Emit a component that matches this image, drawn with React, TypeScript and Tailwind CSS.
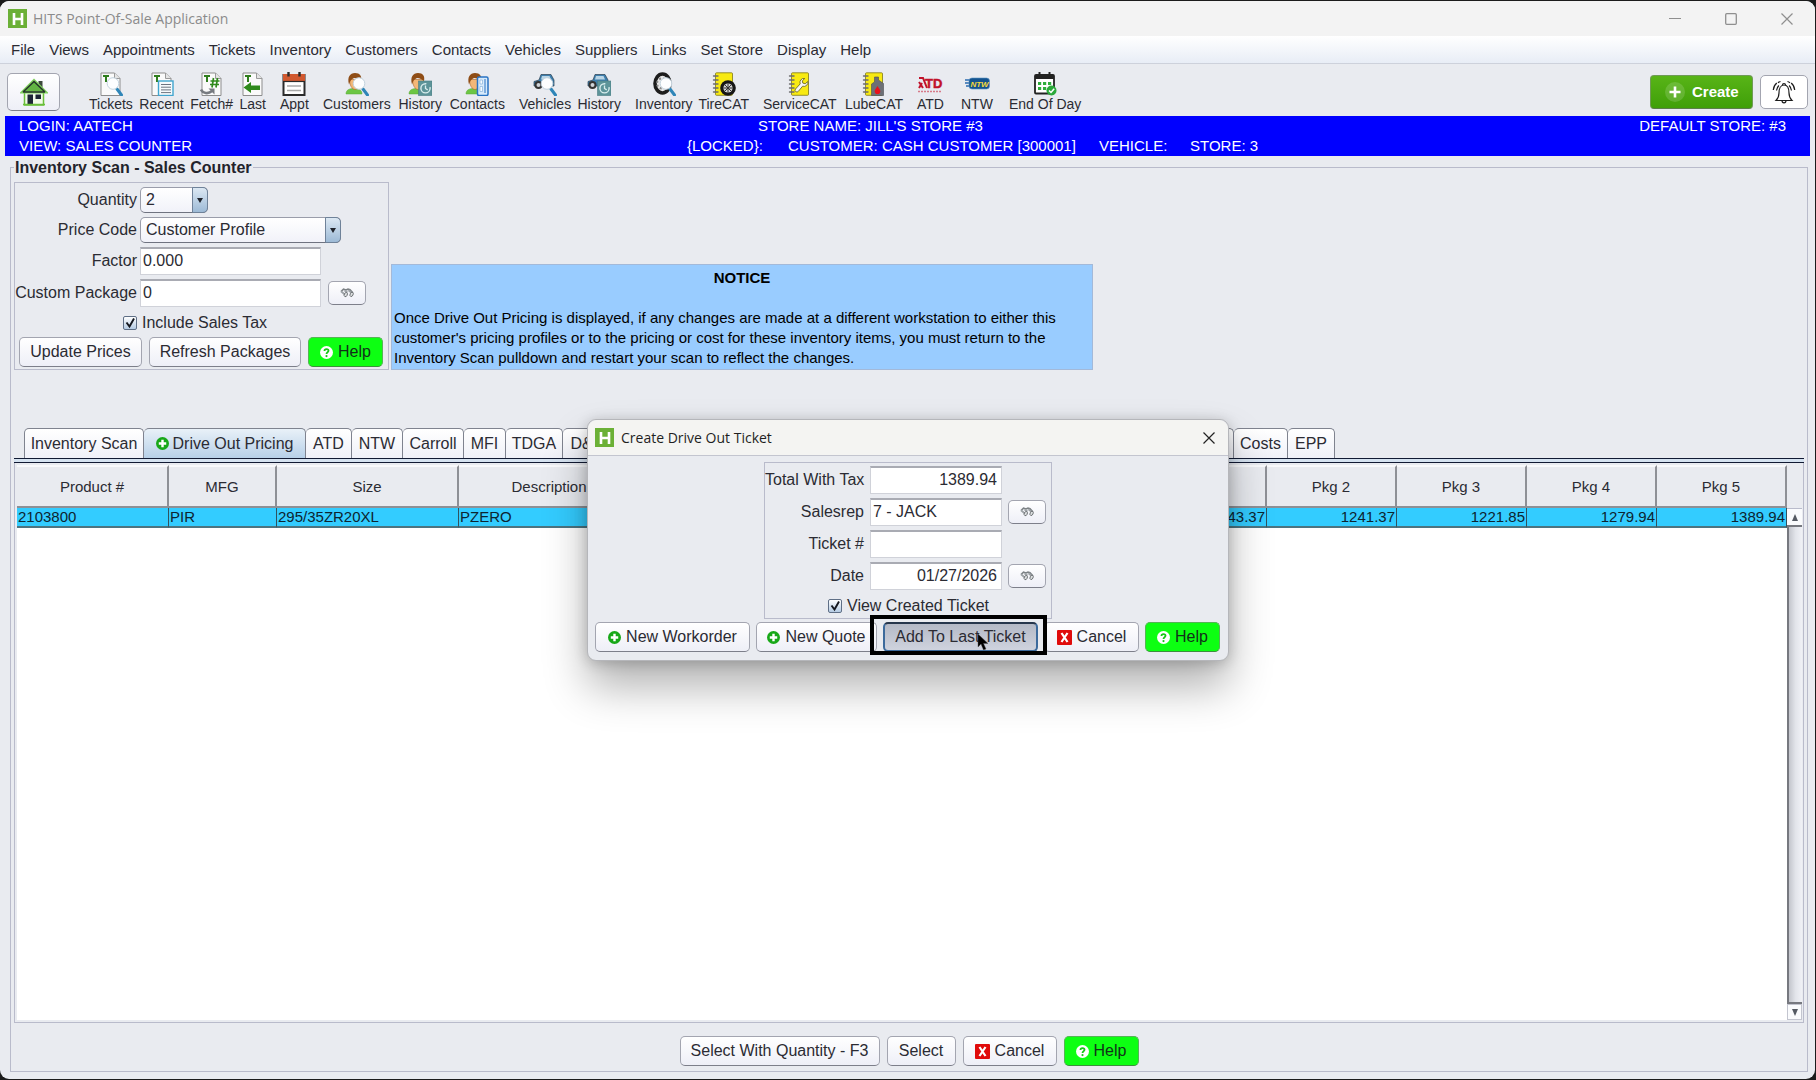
import type { ReactNode } from "react";

const menuItems = [
  "File",
  "Views",
  "Appointments",
  "Tickets",
  "Inventory",
  "Customers",
  "Contacts",
  "Vehicles",
  "Suppliers",
  "Links",
  "Set Store",
  "Display",
  "Help",
];

/* ---------- icon parts ---------- */

function Svg({ children }: { children: ReactNode }) {
  return (
    <svg viewBox="0 0 24 24" className="h-6 w-6" fill="none" aria-hidden="true">
      {children}
    </svg>
  );
}

function TicketSheet() {
  return (
    <>
      <path d="M2 1h13.500l5.500 5.500V23.500H2z" fill="#fafafa" stroke="#8d8d8d" />
      <path d="M15.500 1v5.500H21" fill="#e4e4e4" stroke="#9a9a9a" />
      <path d="M4 4h6M7 4v6" stroke="#2f7d1d" strokeWidth="2" />
    </>
  );
}

function Lens() {
  return (
    <>
      <path d="M18 17l4.500 6" stroke="#2f86b8" strokeWidth="3" strokeLinecap="round" />
      <circle cx="14" cy="11.500" r="5.800" fill="#fdfeff" stroke="#c3d3de" />
    </>
  );
}

function Clock() {
  return (
    <>
      <rect x="10.500" y="9" width="13.500" height="14.500" fill="#5d9499" stroke="#4a7d82" strokeWidth=".6" />
      <circle cx="17.500" cy="16.300" r="4.600" stroke="#d9eded" strokeWidth="1.400" strokeDasharray="22 5" />
      <path d="M17.500 13.500v3l2.200 1.400" stroke="#d9eded" strokeWidth="1.300" />
    </>
  );
}

function Person() {
  return (
    <>
      <path d="M1 22c0-4 3-5.500 8-5.500s8 1.500 8 5.500z" fill="#6cc644" stroke="#5aa838" strokeWidth=".5" />
      <path d="M4.500 7.500C4.500 13 7 17.500 10 17.500s5.500-4.500 5.500-10z" fill="#f3b777" stroke="#a9662a" strokeWidth=".6" />
      <path d="M4 12.500C2 5 5 1 10 1s7 3 6 8c-2-1.500-4-3-7-3-2.500 1-4 3-5 6.500z" fill="#8f4d16" />
    </>
  );
}

function Car() {
  return (
    <>
      <path d="M1 9.500l5-1.500 2-5.500h10l3 5.500v6H1z" fill="#3e7fae" stroke="#2a3f50" strokeWidth=".7" />
      <path d="M9 4h7.500l1.500 3.500H8z" fill="#b9d5e6" />
      <circle cx="5.500" cy="13" r="4" fill="#333" />
      <circle cx="5.500" cy="13" r="2" fill="#cfd3d8" />
    </>
  );
}

function Notebook() {
  return (
    <>
      <rect x="3.500" y=".8" width="17" height="22.500" rx="1" fill="#f8ea12" stroke="#7d7719" strokeWidth=".8" />
      {[4, 8, 12, 16, 20].map((y) => (
        <path key={y} d={`M1.500 ${y}h4.500`} stroke="#6b6b6b" strokeWidth="1.400" strokeLinecap="round" />
      ))}
    </>
  );
}

const icons = {
  tickets: (
    <Svg>
      <TicketSheet />
      <Lens />
    </Svg>
  ),
  recent: (
    <Svg>
      <TicketSheet />
      <rect x="8.500" y="9" width="14.500" height="14.500" fill="#f6fafc" stroke="#41a5cf" strokeWidth="1.400" />
      <path d="M11 12.500h10M11 15.200h10M11 17.900h10M11 20.600h10" stroke="#6c7480" />
    </Svg>
  ),
  fetch: (
    <Svg>
      <TicketSheet />
      <path d="M13.500 6l-1.500 9.500M17.500 6l-1.500 9.500M10.500 9h9M10 12.500h9" stroke="#2f8a1c" strokeWidth="1.700" />
      <path d="M1 17.500c2 4 7 5 11 1.500" stroke="#777b80" strokeWidth="2.600" />
      <path d="M8.500 16.500h6v6z" fill="#777b80" />
    </Svg>
  ),
  last: (
    <Svg>
      <TicketSheet />
      <path d="M2.500 15.500l7.500-5.500v3.500h9v4.500h-9V21z" fill="#2f8a1c" />
    </Svg>
  ),
  appt: (
    <Svg>
      <rect x="1.500" y="3" width="21" height="20" fill="#fff" stroke="#2b2b2b" strokeWidth="2" />
      <path d="M1 2h22v8H1z" fill="#d1582f" />
      <path d="M1 9.500h22" stroke="#2b2b2b" strokeWidth="1.200" />
      <path d="M6.500 0v4.500M17.500 0v4.500" stroke="#2b2b2b" strokeWidth="2.400" />
      <path d="M5 14h14M5 18.500h14" stroke="#a9a9a9" strokeWidth="1.600" />
    </Svg>
  ),
  customers: (
    <Svg>
      <Person />
      <Lens />
    </Svg>
  ),
  customerHistory: (
    <Svg>
      <Person />
      <Clock />
    </Svg>
  ),
  contacts: (
    <Svg>
      <Person />
      <rect x="12.500" y="5" width="10.500" height="18.500" rx="1.500" fill="#d7eafb" stroke="#2873c4" strokeWidth="1.500" />
      <path d="M15 8h2.500v4H15zM15 14.500h2.500v5H15z" fill="#f8fcff" stroke="#79a9d8" strokeWidth=".6" />
      <path d="M20 7v14" stroke="#2873c4" />
    </Svg>
  ),
  vehicles: (
    <Svg>
      <Car />
      <Lens />
    </Svg>
  ),
  vehicleHistory: (
    <Svg>
      <Car />
      <Clock />
    </Svg>
  ),
  inventory: (
    <Svg>
      <ellipse cx="10.500" cy="11.500" rx="7.500" ry="9.500" fill="#e8e8e8" stroke="#1d1d1d" strokeWidth="3.600" />
      <circle cx="10" cy="11.500" r="5" stroke="#8b8b8b" strokeDasharray="2 2" strokeWidth="2" />
      <Lens />
    </Svg>
  ),
  tirecat: (
    <Svg>
      <Notebook />
      <circle cx="16" cy="16" r="7.800" fill="#161616" />
      <circle cx="16" cy="16" r="4.600" fill="#d7d7d7" />
      <path d="M16 11.500v9M11.500 16h9M13 13l6 6M19 13l-6 6" stroke="#333" />
    </Svg>
  ),
  servicecat: (
    <Svg>
      <Notebook />
      <path
        d="M16.800 6.500a4 4 0 0 0-4.600 5.400L7.500 17a1.800 1.800 0 0 0 2.800 2.400l4.300-5.200a4 4 0 0 0 5.200-4.700l-2.600 2.300-2.400-.7-.5-2.300z"
        fill="#f6f6f6"
        stroke="#6f6b20"
        strokeWidth=".9"
      />
    </Svg>
  ),
  lubecat: (
    <Svg>
      <Notebook />
      <path d="M12.500 5h4v3l5 3.500V23.500H9.500V12l3-2z" fill="#6d7076" stroke="#4c4e52" strokeWidth=".6" />
      <path d="M15.500 14c2 3 2.800 4 2.800 5.300a2.800 2.800 0 0 1-5.600 0c0-1.300.8-2.300 2.800-5.300z" fill="#e8121b" />
    </Svg>
  ),
  atd: (
    <svg viewBox="0 0 26 24" className="h-6 w-[26px]" aria-hidden="true">
      <path d="M2 6h4l4 10M2 10l4 6M2 16l3-5" fill="none" stroke="#c1122b" strokeWidth="2" />
      <text x="8" y="16" fontSize="13" fontWeight="700" fill="#c1122b" stroke="#c1122b" strokeWidth=".5" className="font-['Liberation_Sans',sans-serif]">
        TD
      </text>
      <path d="M1 19.500h24" stroke="#d77a88" strokeWidth="1.500" strokeDasharray="2 1" />
    </svg>
  ),
  ntw: (
    <svg viewBox="0 0 26 24" className="h-6 w-[26px]" aria-hidden="true">
      <path d="M1 8h6M1 11h6M2 14h6" stroke="#2b6cb0" strokeWidth="1.600" />
      <rect x="5" y="6" width="20.500" height="11" rx="3" fill="#14538f" stroke="#5b93c4" strokeWidth=".6" />
      <text x="15.500" y="14.500" fontSize="8" fontWeight="700" fontStyle="italic" fill="#f6d93b" textAnchor="middle" className="font-['Liberation_Sans',sans-serif]">
        NTW
      </text>
    </svg>
  ),
  endOfDay: (
    <Svg>
      <rect x="2" y="3" width="19" height="18.500" rx="1" fill="#fff" stroke="#222" strokeWidth="1.800" />
      <path d="M2 3.500h19v3.500H2z" fill="#222" />
      <path d="M6.500 0v5M16.500 0v5" stroke="#222" strokeWidth="2" />
      <path d="M5 10h3.200v3H5zM10 10h3.200v3H10zM15 10h3.200v3H15zM5 15h3.200v3H5zM10 15h3.200v3H10z" fill="#2fae3c" />
      <circle cx="18.500" cy="18.500" r="5" fill="#2ba93a" />
      <path d="M16 18.500l2 2 3.200-3.800" stroke="#fff" strokeWidth="1.500" />
    </Svg>
  ),
};

function AppLogo() {
  return (
    <span className="flex h-[19px] w-[19px] items-center justify-center bg-[#6bb036]" aria-hidden="true">
      <svg viewBox="0 0 12 12" className="h-3 w-3">
        <path d="M2 0v12M10 0v12M2 6h8" stroke="#fff" strokeWidth="2.600" fill="none" />
      </svg>
    </span>
  );
}

function PlusIcon() {
  return (
    <svg viewBox="0 0 14 14" className="h-[13px] w-[13px] shrink-0" aria-hidden="true">
      <circle cx="7" cy="7" r="7" fill="#18a818" />
      <path d="M7 3v8M3 7h8" stroke="#fff" strokeWidth="2.600" />
    </svg>
  );
}

function HelpIcon() {
  return (
    <svg viewBox="0 0 14 14" className="h-[13px] w-[13px] shrink-0" aria-hidden="true">
      <circle cx="7" cy="7" r="7" fill="#fff" />
      <path d="M4.800 5.300C4.800 2.600 9.200 2.700 9.200 5.200 9.200 6.800 7 6.800 7 8.600" fill="none" stroke="#14c914" strokeWidth="1.900" />
      <circle cx="7" cy="10.900" r="1.200" fill="#14c914" />
    </svg>
  );
}

function CancelIcon() {
  return (
    <svg viewBox="0 0 15 15" className="h-[15px] w-[15px] shrink-0" aria-hidden="true">
      <rect width="15" height="15" rx="1" fill="#e00b0b" />
      <path d="M4.500 3l6 9M10.500 3l-6 9" stroke="#fff" strokeWidth="2.200" />
    </svg>
  );
}

function BinocularsIcon() {
  return (
    <svg viewBox="0 0 14 10" className="h-[10px] w-[14px]" aria-hidden="true">
      <path d="M1 3.500L3.500 1.200 6 2 8 1.200 10 1.800 13 5" fill="none" stroke="#7b8084" strokeWidth="1.600" />
      <path d="M1 3.200l3.500 3M4.500 2.500l3 2M8.500 2.200l3 2.600" stroke="#9da2a6" strokeWidth="1.800" />
      <ellipse cx="5.800" cy="6.600" rx="1.500" ry="2.200" transform="rotate(25 5.800 6.600)" fill="#dde0e1" stroke="#5f6366" strokeWidth=".8" />
      <ellipse cx="11.600" cy="6.400" rx="1.500" ry="2.200" transform="rotate(25 11.600 6.400)" fill="#dde0e1" stroke="#5f6366" strokeWidth=".8" />
    </svg>
  );
}

/* ---------- controls ---------- */

const buttonBase =
  "flex h-[30px] items-center justify-center rounded-[5px] border text-[16px] leading-5 whitespace-nowrap";
const buttonLight =
  "border-[#a3a5b0] border-b-[#7d7f8a] bg-linear-to-b from-white to-[#eeeff7] text-[#2b2b33]";

function PlainButton({ icon, label, width }: { icon?: ReactNode; label: string; width: string }) {
  return (
    <button type="button" className={`${buttonBase} ${buttonLight} ${width} gap-[5px]`}>
      {icon}
      {label}
    </button>
  );
}

function HelpButton() {
  return (
    <button type="button" className={`${buttonBase} w-[75px] gap-[5px] border-[#55b455] border-b-[#3d8f3d] bg-[#0dff12] text-[#12301a]`}>
      <HelpIcon />
      Help
    </button>
  );
}

function LookupButton({ label }: { label: string }) {
  return (
    <button type="button" aria-label={label} className={`flex h-6 w-[38px] items-center justify-center rounded-[5px] border ${buttonLight}`}>
      <BinocularsIcon />
    </button>
  );
}

function TextField({ id, value, width, right }: { id: string; value: string; width: string; right?: boolean }) {
  return (
    <input
      id={id}
      type="text"
      defaultValue={value}
      className={`h-7 border border-[#d0d2d9] border-t-2 border-t-[#a9abb3] bg-white pr-1 pb-px pl-[2px] text-[16px] text-[#2b2b33] outline-none ${width} ${right ? "text-right" : ""}`}
    />
  );
}

function SelectField({ id, value, width }: { id: string; value: string; width: string }) {
  return (
    <div className={`relative h-[26px] ${width}`}>
      <select
        id={id}
        defaultValue={value}
        className="h-full w-full appearance-none rounded-[5px] border border-[#9a9daa] border-b-[#6f7380] bg-linear-to-b from-white to-[#f1f2f9] pl-[5px] text-[16px] text-[#2b2b33] outline-none"
      >
        <option>{value}</option>
      </select>
      <span className="pointer-events-none absolute inset-y-0 right-0 flex w-4 items-center justify-center rounded-r-[5px] border border-[#6f8299] bg-linear-to-b from-[#dce8f3] to-[#9dbad6]">
        <svg viewBox="0 0 6 5" className="h-[5px] w-[6px]" aria-hidden="true">
          <path d="M0 0h6L3 5z" fill="#20242c" />
        </svg>
      </span>
    </div>
  );
}

function CheckField({ id, label }: { id: string; label: string }) {
  return (
    <div className="flex h-4 items-center gap-[5px]">
      <span className="relative h-[14px] w-[14px]">
        <input
          id={id}
          type="checkbox"
          defaultChecked
          className="block h-full w-full appearance-none rounded-[2px] border border-[#5f6f86] bg-linear-to-b from-white to-[#b5cbe3]"
        />
        <svg viewBox="0 0 14 14" className="pointer-events-none absolute inset-0 h-full w-full" aria-hidden="true">
          <path d="M3.500 6.500l3 4 4.500-8" fill="none" stroke="#15181f" strokeWidth="1.900" />
        </svg>
      </span>
      <label htmlFor={id}>{label}</label>
    </div>
  );
}

/* ---------- toolbar ---------- */

const toolGroups = [
  {
    width: "w-[177px]",
    tools: [
      { label: "Tickets", icon: icons.tickets },
      { label: "Recent", icon: icons.recent },
      { label: "Fetch#", icon: icons.fetch },
      { label: "Last", icon: icons.last },
    ],
  },
  { width: "w-[29px]", tools: [{ label: "Appt", icon: icons.appt }] },
  {
    width: "w-[182px]",
    tools: [
      { label: "Customers", icon: icons.customers },
      { label: "History", icon: icons.customerHistory },
      { label: "Contacts", icon: icons.contacts },
    ],
  },
  {
    width: "w-[102px]",
    tools: [
      { label: "Vehicles", icon: icons.vehicles },
      { label: "History", icon: icons.vehicleHistory },
    ],
  },
  {
    width: "w-[114px]",
    tools: [
      { label: "Inventory", icon: icons.inventory },
      { label: "TireCAT", icon: icons.tirecat },
    ],
  },
  {
    width: "w-[140px]",
    tools: [
      { label: "ServiceCAT", icon: icons.servicecat },
      { label: "LubeCAT", icon: icons.lubecat },
    ],
  },
  { width: "w-[30px]", tools: [{ label: "ATD", icon: icons.atd }] },
  { width: "w-[34px]", tools: [{ label: "NTW", icon: icons.ntw }] },
  { width: "w-[74px]", tools: [{ label: "End Of Day", icon: icons.endOfDay }] },
];

function Toolbar() {
  return (
    <div className="flex h-[52px] items-center px-[7px] pt-1">
      <button type="button" aria-label="Home" className={`flex h-[38px] w-[53px] items-center justify-center rounded-[5px] border ${buttonLight}`}>
        <svg viewBox="0 0 28 28" className="h-7 w-7" aria-hidden="true">
          <path d="M4.500 14h19v13h-19z" fill="#f2fbe9" stroke="#6abf3b" strokeWidth="1.500" />
          <path d="M18.500 3h4v8h-4z" fill="#3c4a3c" />
          <path d="M1.500 14.500L14 2l12.500 12.500z" fill="#63b544" stroke="#7fd05c" strokeWidth="2" />
          <path d="M3 14L14 3.500 25 14M3 14h22" fill="none" stroke="#26352a" strokeWidth="1.600" />
          <path d="M7.500 16.500h5.500V26H7.500z" fill="#1d2535" />
          <path d="M15.500 16.500h5.500V21h-5.500z" fill="#1d2535" />
          <path d="M3 26.500h22" stroke="#6abf3b" strokeWidth="1.500" />
        </svg>
      </button>
      <div className="ml-[29px] flex gap-[14px]">
        {toolGroups.map((group, index) => (
          <div key={index} className={`flex shrink-0 justify-between ${group.width}`}>
            {group.tools.map((tool) => (
              <button key={tool.label} type="button" className="flex flex-col items-center text-[14px] leading-4 whitespace-nowrap text-[#2b2b33]">
                {tool.icon}
                {tool.label}
              </button>
            ))}
          </div>
        ))}
      </div>
      <div className="ml-auto flex gap-[7px]">
        <button
          type="button"
          className="flex h-[34px] w-[103px] items-center gap-[7px] rounded-[4px] border border-[#6f9a56] border-b-[#5b7f49] bg-linear-to-b from-[#58b417] to-[#3f9f08] pl-[14px] text-[15px] font-bold text-white"
        >
          <svg viewBox="0 0 20 20" className="h-5 w-5" aria-hidden="true">
            <circle cx="10" cy="10" r="10" fill="#fff" fillOpacity=".15" />
            <path d="M10 4.500v11M4.500 10h11" stroke="#fff" strokeWidth="2.600" />
          </svg>
          Create
        </button>
        <button type="button" aria-label="Notifications" className="flex h-[34px] w-[48px] items-center justify-center rounded-[5px] border border-[#a3a5b0] bg-white">
          <svg viewBox="0 0 24 24" className="h-6 w-6" fill="none" stroke="#1c1c1c" strokeWidth="1.200" aria-hidden="true">
            <path d="M4 20.500c2-2 3-3.500 3-7.500 0-4 1.500-8 5-8s5 4 5 8c0 4 1 5.500 3 7.500z" />
            <path d="M10.500 5a1.500 1.500 0 0 1 3 0M10 20.500a2 2.300 0 0 0 4 0" />
            <path d="M6.800 5.500C5.500 7 4.800 8.500 4.500 10.500M4.800 3C3 4.500 1.500 7 1.300 10M8.500 1.500C7.500 1.800 6.800 2 6 2.800" />
            <path d="M17.200 5.500c1.300 1.500 2 3 2.300 5M19.200 3c1.800 1.500 3.300 4 3.500 7M15.500 1.500c1 .3 1.700.5 2.500 1.300" />
          </svg>
        </button>
      </div>
    </div>
  );
}

/* ---------- page sections ---------- */

function StatusBar() {
  return (
    <div className="mr-[5px] ml-[5px] h-10 bg-[#0000ff] pr-6 pl-[14px] text-[15px] leading-5 whitespace-nowrap text-white">
      <div className="flex">
        <span className="w-[739px]">LOGIN: AATECH</span>
        <span>STORE NAME: JILL&apos;S STORE #3</span>
        <span className="ml-auto">DEFAULT STORE: #3</span>
      </div>
      <div className="flex">
        <span className="w-[668px]">VIEW: SALES COUNTER</span>
        <span className="w-[101px]">{"{LOCKED}:"}</span>
        <span className="w-[311px]">CUSTOMER: CASH CUSTOMER [300001]</span>
        <span className="w-[91px]">VEHICLE:</span>
        <span>STORE: 3</span>
      </div>
    </div>
  );
}

function PricingForm() {
  return (
    <form className="w-[375px] shrink-0 border border-[#b9bbcb] pt-1 pb-[2px] text-[16px] leading-5 text-[#2b2b33]">
      <div className="grid grid-cols-[122px_1fr] items-center gap-x-[3px] gap-y-1 text-right">
        <label htmlFor="quantity">Quantity</label>
        <SelectField id="quantity" value="2" width="w-[68px]" />
        <label htmlFor="price-code">Price Code</label>
        <SelectField id="price-code" value="Customer Profile" width="w-[201px]" />
        <label htmlFor="factor">Factor</label>
        <div className="flex">
          <TextField id="factor" value="0.000" width="w-[181px]" />
        </div>
        <label htmlFor="custom-package" className="whitespace-nowrap">Custom Package</label>
        <div className="flex items-center gap-[7px]">
          <TextField id="custom-package" value="0" width="w-[181px]" />
          <LookupButton label="Find package" />
        </div>
      </div>
      <div className="mt-2 pl-[108px]">
        <CheckField id="include-tax" label="Include Sales Tax" />
      </div>
      <div className="mt-[6px] flex gap-[7px] pl-1">
        <PlainButton label="Update Prices" width="w-[123px]" />
        <PlainButton label="Refresh Packages" width="w-[152px]" />
        <HelpButton />
      </div>
    </form>
  );
}

function Notice() {
  return (
    <div className="ml-[2px] h-[106px] w-[702px] shrink-0 border border-[#a3b9d9] bg-[#99ccff] px-[2px] pt-[3px] text-[15px] leading-5 whitespace-nowrap text-black">
      <p className="text-center font-bold">NOTICE</p>
      <p className="mt-5">
        Once Drive Out Pricing is displayed, if any changes are made at a different workstation to either this
        <br />
        customer&apos;s pricing profiles or to the pricing or cost for these inventory items, you must return to the
        <br />
        Inventory Scan pulldown and restart your scan to reflect the changes.
      </p>
    </div>
  );
}

const tabs = [
  { label: "Inventory Scan", width: "w-[120px]" },
  { label: "Drive Out Pricing", width: "w-[162px]", active: true },
  { label: "ATD", width: "w-[46px]" },
  { label: "NTW", width: "w-[51px]" },
  { label: "Carroll", width: "w-[61px]" },
  { label: "MFI", width: "w-[42px]" },
  { label: "TDGA", width: "w-[57px]" },
  { label: "D&K", width: "w-[49px]" },
  { label: "", width: "w-[622px]" },
  { label: "Costs", width: "w-[54px]" },
  { label: "EPP", width: "w-[47px]" },
];

function TabStrip() {
  return (
    <div role="tablist" className="flex h-[30px] pl-[10px]">
      {tabs.map((tab) => (
        <button
          key={tab.label}
          type="button"
          role="tab"
          aria-selected={!!tab.active}
          className={`flex shrink-0 items-center justify-center gap-[4px] rounded-t-[5px] border border-b-0 border-l-0 border-[#7f838f] text-[16px] whitespace-nowrap text-[#2b2b33] first:border-l ${tab.width} ${
            tab.active ? "bg-linear-to-b from-[#e9f1f8] to-[#b7d0e8]" : "bg-linear-to-b from-white to-[#f0f1f8]"
          }`}
        >
          {tab.active && <PlusIcon />}
          {tab.label}
        </button>
      ))}
    </div>
  );
}

const columns = [
  { header: "Product #", width: "w-[152px]", value: "2103800" },
  { header: "MFG", width: "w-[108px]", value: "PIR" },
  { header: "Size", width: "w-[182px]", value: "295/35ZR20XL" },
  { header: "Description", width: "w-[182px]", value: "PZERO" },
  { header: "", width: "", value: "" },
  { header: "Pkg 1", width: "w-[130px]", value: "1243.37", right: true },
  { header: "Pkg 2", width: "w-[130px]", value: "1241.37", right: true },
  { header: "Pkg 3", width: "w-[130px]", value: "1221.85", right: true },
  { header: "Pkg 4", width: "w-[130px]", value: "1279.94", right: true },
  { header: "Pkg 5", width: "w-[130px]", value: "1389.94", right: true },
];

function ResultTable() {
  return (
    <div className="flex flex-1 border border-t-0 border-[#b9bbcb] bg-[#e9ebf0] pt-[2px] pr-px pb-[2px] pl-[2px]">
      <div className="flex-1 bg-white">
        <table className="w-full table-fixed border-separate border-spacing-0 text-[15px] leading-5 text-[#2b2b33]">
          <thead>
            <tr className="bg-[#e9ebf0]">
              {columns.map((col) => (
                <th
                  key={col.header}
                  className={`h-[43px] border-t-2 border-r-2 border-b-2 border-t-[#f8f9fb] border-r-[#8e9096] border-b-[#8e9096] p-0 font-normal ${col.width}`}
                >
                  {col.header}
                </th>
              ))}
            </tr>
          </thead>
          <tbody>
            <tr className="bg-[#33ccff] text-[#0d2430]">
              {columns.map((col) => (
                <td
                  key={col.header}
                  className={`h-5 border-r border-b-2 border-r-[#31525e] border-b-[#4c7480] px-px py-0 leading-[18px] ${col.right ? "text-right" : ""}`}
                >
                  {col.value}
                </td>
              ))}
            </tr>
          </tbody>
        </table>
      </div>
      <div className="flex w-[15px] flex-col pt-[43px]">
        <div className="flex h-[17px] items-center justify-center border-t border-[#b9bbcb] bg-[#fafbfd]">
          <svg viewBox="0 0 6 7" className="h-[7px] w-[6px]" aria-hidden="true">
            <path d="M0 7h6L3 0z" fill="#555a63" />
          </svg>
        </div>
        <div className="flex-1 border-y-2 border-l-2 border-[#76787f] bg-linear-to-r from-[#c3c5cc] via-[#e2e4ea] to-[#f0f1f6]" />
        <div className="flex h-4 items-center justify-center border border-[#c3c5cf] bg-[#fafbfd]">
          <svg viewBox="0 0 6 7" className="h-[7px] w-[6px]" aria-hidden="true">
            <path d="M0 0h6L3 7z" fill="#555a63" />
          </svg>
        </div>
      </div>
    </div>
  );
}

function DriveOutDialog() {
  return (
    <div
      role="dialog"
      aria-label="Create Drive Out Ticket"
      className="absolute top-[419px] left-1/2 w-[642px] -translate-x-1/2 rounded-[9px] border border-[#b5b6ba] bg-[#e9ebf0] text-[16px] leading-5 text-[#2b2b33] shadow-[0_26px_44px_rgba(0,0,0,0.3),0_2px_14px_rgba(0,0,0,0.2)]"
    >
      <div className="flex h-9 items-center rounded-t-[9px] border-b border-[#c3c5cf] bg-[#f4f4f2] pr-3 pl-[7px]">
        <AppLogo />
        <h2 className="ml-[7px] font-['Open_Sans',sans-serif] text-[14px] text-[#1f1f1f]">Create Drive Out Ticket</h2>
        <button type="button" aria-label="Close" className="ml-auto p-px">
          <svg viewBox="0 0 12 12" className="h-3 w-3" aria-hidden="true">
            <path d="M.5.500l11 11M11.500.500l-11 11" stroke="#222" strokeWidth="1.200" />
          </svg>
        </button>
      </div>
      <div className="mx-auto mt-[6px] w-[288px] border border-[#b9bbcb] pt-[3px] pb-1">
        <div className="grid grid-cols-[99px_132px_1fr] items-center gap-x-[6px] gap-y-1">
          <label htmlFor="total" className="text-right whitespace-nowrap">Total With Tax</label>
          <TextField id="total" value="1389.94" width="w-full" right />
          <span />
          <label htmlFor="salesrep" className="text-right">Salesrep</label>
          <TextField id="salesrep" value="7 - JACK" width="w-full" />
          <LookupButton label="Find salesrep" />
          <label htmlFor="ticket" className="text-right">Ticket #</label>
          <TextField id="ticket" value="" width="w-full" />
          <span />
          <label htmlFor="date" className="text-right">Date</label>
          <TextField id="date" value="01/27/2026" width="w-full" right />
          <LookupButton label="Pick date" />
        </div>
        <div className="mt-2 pl-[63px]">
          <CheckField id="view-ticket" label="View Created Ticket" />
        </div>
      </div>
      <div className="mt-[3px] flex gap-[6px] pb-2 pl-[7px]">
        <PlainButton icon={<PlusIcon />} label="New Workorder" width="w-[155px]" />
        <PlainButton icon={<PlusIcon />} label="New Quote" width="w-[121px]" />
        <div className="relative">
          <button
            type="button"
            className={`${buttonBase} w-[155px] border-2 border-[#3c6a9c] border-t-[#26364c] bg-linear-to-b from-[#b4b9c6] to-[#cfd3de] text-[#2b2b33]`}
          >
            Add To Last Ticket
          </button>
          <span className="pointer-events-none absolute -top-[7px] -right-[9px] -bottom-[3px] -left-[13px] z-10 border-4 border-black" />
          <svg viewBox="0 0 12 18" className="pointer-events-none absolute top-[11px] left-[94px] z-10 h-[18px] w-3" aria-hidden="true">
            <path d="M1 1v13l3-3 2.500 6 2.500-1-2.500-5.500H11z" fill="#000" stroke="#555" strokeWidth=".4" />
          </svg>
        </div>
        <PlainButton icon={<CancelIcon />} label="Cancel" width="w-[95px]" />
        <HelpButton />
      </div>
    </div>
  );
}

export default function App() {
  return (
    <div className="relative flex min-h-screen flex-col bg-[#1b1b1b] pt-px pr-px pb-px font-['Liberation_Sans',Arial,sans-serif]">
      <div className="flex flex-1 flex-col rounded-[9px] bg-[#e9ebf0]">
        <header className="flex h-[35px] items-center rounded-t-[9px] bg-[#f3f3f3] pr-[22px] pl-2">
          <AppLogo />
          <h1 className="ml-[6px] font-['Open_Sans',sans-serif] text-[14px] text-[#8b8b8b]">HITS Point-Of-Sale Application</h1>
          <div className="ml-auto flex items-center gap-11">
            <button type="button" aria-label="Minimize">
              <svg viewBox="0 0 12 12" className="h-3 w-3" aria-hidden="true">
                <path d="M0 5.500h12" stroke="#8f8f8f" />
              </svg>
            </button>
            <button type="button" aria-label="Maximize">
              <svg viewBox="0 0 12 12" className="h-3 w-3" aria-hidden="true">
                <rect x=".7" y=".7" width="10.600" height="10.600" rx="1" fill="none" stroke="#8f8f8f" strokeWidth="1.300" />
              </svg>
            </button>
            <button type="button" aria-label="Close window">
              <svg viewBox="0 0 12 12" className="h-3 w-3" aria-hidden="true">
                <path d="M.5.500l11 11M11.500.500l-11 11" stroke="#8f8f8f" strokeWidth="1.200" />
              </svg>
            </button>
          </div>
        </header>

        <nav className="flex h-7 items-center gap-[14px] border-b border-[#cdd1db] bg-linear-to-b from-white to-[#e8edf6] pt-[2px] pl-[11px] text-[15px] text-[#2b2b33]">
          {menuItems.map((item) => (
            <a key={item} href="#" className="whitespace-nowrap">
              {item}
            </a>
          ))}
        </nav>

        <Toolbar />
        <StatusBar />

        <section className="mt-[11px] mr-[7px] mb-[7px] ml-[10px] flex flex-1 flex-col border border-[#b9bbcb] px-[3px]">
          <h2 className="-mt-[10px] w-fit bg-[#e9ebf0] px-px text-[16px] leading-5 font-bold text-[#23232b]">Inventory Scan - Sales Counter</h2>
          <div className="mt-1 flex items-end">
            <PricingForm />
            <Notice />
          </div>
          <div className="mt-[58px] flex flex-1 flex-col">
            <TabStrip />
            <div className="h-[5px] border-y border-[#111a33] bg-[#d5e2f0]" />
            <ResultTable />
          </div>
          <div className="flex justify-center gap-[7px] pt-[13px] pb-[5px]">
            <PlainButton label="Select With Quantity - F3" width="w-[200px]" />
            <PlainButton label="Select" width="w-[69px]" />
            <PlainButton icon={<CancelIcon />} label="Cancel" width="w-[94px]" />
            <HelpButton />
          </div>
        </section>
      </div>

      <DriveOutDialog />
    </div>
  );
}
